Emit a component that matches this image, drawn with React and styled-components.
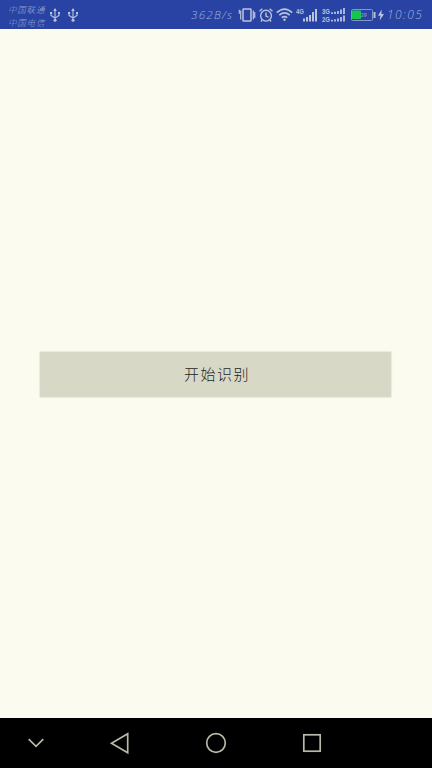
import React from "react";
import styled, { createGlobalStyle } from "styled-components";

const GlobalStyle = createGlobalStyle`
  * { box-sizing: border-box; }
  body { margin: 0; background: #fbfbf0; }
`;

const Screen = styled.div`
  width: 432px;
  height: 768px;
  display: flex;
  flex-direction: column;
  overflow: hidden;
  background: #fbfbf0;
  font-family: "Liberation Sans", "Noto Sans CJK SC", sans-serif;
`;

const StatusBar = styled.header`
  height: 29px;
  flex: none;
  display: flex;
  align-items: center;
  padding: 0 9px 0 8px;
  background: #2843a4;
  color: #b9c3dc;
`;

const Carriers = styled.div`
  width: 42px;
  display: flex;
  flex-direction: column;
  padding-top: 2px;
  font: italic 300 8.5px/13px "Noto Sans CJK SC", sans-serif;
  letter-spacing: 0.8px;
  white-space: nowrap;
  color: #93a3cf;
`;

const Group = styled.div`
  display: flex;
  align-items: center;
  gap: ${(p) => p.$gap || 0}px;
  margin-left: ${(p) => (p.$end ? "auto" : "0")};
`;

const Readout = styled.span`
  width: ${(p) => p.$width}px;
  flex: none;
  font: italic 300 ${(p) => p.$size}px/20px "Open Sans", sans-serif;
  letter-spacing: ${(p) => p.$spacing}px;
  white-space: nowrap;
  color: #a3b1d7;
  margin-right: ${(p) => p.$after || 0}px;
  padding-top: 1px;
`;

const Icon = styled.svg`
  display: block;
  flex: none;
  margin-right: ${(p) => p.$after || 0}px;
  fill: none;
  stroke: currentColor;
  overflow: visible;
`;

const SignalLabel = styled.text`
  font: bold ${(p) => p.$size}px "Liberation Sans", sans-serif;
  fill: currentColor;
  stroke: none;
`;

const Content = styled.main`
  flex: 1;
  display: flex;
  justify-content: center;
  align-items: flex-start;
  padding-top: 323px;
`;

const StartButton = styled.button`
  width: 351px;
  height: 45px;
  margin: 0 1px 0 0;
  padding: 0 0 1px 3px;
  border: 0;
  border-radius: 1px;
  background: #d8d8c6;
  box-shadow: 0 0 1px 1px #e9e9dc;
  color: #25251f;
  font: 300 15px/24px "Noto Sans CJK SC", sans-serif;
  letter-spacing: 1.5px;
`;

const NavBar = styled.nav`
  height: 50px;
  flex: none;
  display: flex;
  align-items: center;
  padding-left: 24px;
  background: #000;
  color: #b8b8a8;
`;

const NavButton = styled.button`
  width: 24px;
  height: 24px;
  padding: 0;
  margin-right: ${(p) => p.$after || 0}px;
  border: 0;
  background: none;
  color: inherit;
`;

const UsbIcon = () => (
  <Icon width="10" height="14" viewBox="0 0 10 14" strokeWidth="1.1">
    <path d="M5 2v10M1 5v2.5L5 10l4-2.5V5" />
    <path d="M5 0L3.2 3h3.6zM0 4h2.2v2H0zM8 4h2v2H8z" fill="currentColor" stroke="none" />
    <circle cx="5" cy="12.2" r="1.5" fill="currentColor" stroke="none" />
  </Icon>
);

const VibrateIcon = () => (
  <Icon width="16" height="14" viewBox="0 0 16 14" strokeWidth="1.5" $after={4}>
    <rect x="4" y="1" width="8" height="12" rx="0.5" />
    <path d="M1.7 2.5v9M.3 1.8v4M14.3 2.5v9M15.7 4v6" strokeWidth="1.2" />
  </Icon>
);

const AlarmIcon = () => (
  <Icon width="14" height="14" viewBox="0 0 14 14" strokeWidth="1.4" $after={3}>
    <circle cx="7" cy="7.7" r="5.4" />
    <path d="M7 4.5v3.6l2.5 1M.5 3.3L3.4.8M13.5 3.3L10.6.8M3 12l-1 1.5M11 12l1 1.5" />
  </Icon>
);

const WifiIcon = () => (
  <Icon width="17" height="13" viewBox="0 0 17 13" strokeWidth="1.6" $after={3}>
    <path d="M.8 4.6Q8.5-2.5 16.2 4.6M3.3 7.2q5.2-4.5 10.4 0M5.8 9.7q2.7-2.2 5.4 0" />
    <circle cx="8.5" cy="11.7" r="1.2" fill="currentColor" stroke="none" />
  </Icon>
);

const SignalIcon = () => (
  <Icon width="22" height="14" viewBox="0 0 22 14" strokeWidth="2" $after={4}>
    <SignalLabel x="0" y="5.5" $size={7} textLength="8" lengthAdjust="spacingAndGlyphs">4G</SignalLabel>
    <path d="M8 13.5v-3M11 13.5V9M14 13.5V7M17 13.5V4M20 13.5V1" />
  </Icon>
);

const DualSignalIcon = () => (
  <Icon width="23" height="14" viewBox="0 0 23 14" strokeWidth="1.8" $after={6}>
    <SignalLabel x="0" y="6" $size={7.5} textLength="8" lengthAdjust="spacingAndGlyphs">3G</SignalLabel>
    <SignalLabel x="0" y="13.5" $size={7.5} textLength="8" lengthAdjust="spacingAndGlyphs">2G</SignalLabel>
    <path d="M10 6V4.2M13 6V3.7M16 6V3M19 6V1.5M22 6V0M10 13.5v-1.8M13 13.5v-2.3M16 13.5v-3M19 13.5V9M22 13.5v-6" />
  </Icon>
);

const BatteryIcon = () => (
  <Icon width="34" height="12" viewBox="0 0 34 12" strokeWidth="1" $after={2}>
    <rect x=".5" y=".5" width="21" height="11" rx="1" stroke="#8495c8" />
    <path d="M1 1.5h9v8.5H1z" fill="#16c64e" stroke="none" />
    <text x="9" y="8.3" fontSize="6" fontStyle="italic" fill="#8ea9bc" stroke="none">39</text>
    <path d="M23.5 3v6" strokeWidth="2" />
    <path d="M30.6.5L27 6.8h2.4l-.7 4.7L33 5h-2.5z" fill="currentColor" stroke="none" />
  </Icon>
);

const navItems = [
  { name: "收起", after: 60, art: <path d="M4.7 8.2l7.3 7.2 7.3-7.2" /> },
  { name: "返回", after: 72, art: <path d="M19.7 2.7v19L3.5 12.2z" /> },
  { name: "主页", after: 72, art: <circle cx="12" cy="12" r="9.3" /> },
  { name: "最近任务", after: 0, art: <rect x="3.8" y="3.8" width="16.4" height="16.4" /> },
];

export default function App() {
  return (
    <Screen>
      <GlobalStyle />
      <StatusBar>
        <Carriers>
          <span>中国联通</span>
          <span>中国电信</span>
        </Carriers>
        <Group $gap={8}>
          <UsbIcon />
          <UsbIcon />
        </Group>
        <Group $end>
          <Readout $width={45} $size={11.5} $spacing={1.3} $after={3}>362B/s</Readout>
          <VibrateIcon />
          <AlarmIcon />
          <WifiIcon />
          <SignalIcon />
          <DualSignalIcon />
          <BatteryIcon />
          <Readout $width={36} $size={12} $spacing={1.4}>10:05</Readout>
        </Group>
      </StatusBar>
      <Content>
        <StartButton>开始识别</StartButton>
      </Content>
      <NavBar>
        {navItems.map(({ name, after, art }) => (
          <NavButton key={name} $after={after} aria-label={name}>
            <Icon width="24" height="24" viewBox="0 0 24 24" strokeWidth="1.7">{art}</Icon>
          </NavButton>
        ))}
      </NavBar>
    </Screen>
  );
}
